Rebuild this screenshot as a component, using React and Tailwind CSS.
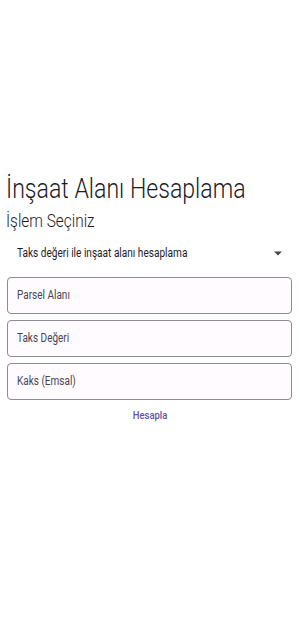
import React, { useState } from 'react';

const fields = ['Parsel Alanı', 'Taks Değeri', 'Kaks (Emsal)'];

// the screenshot is a bit narrow, so text gets squeezed horizontally
function T({ children, s = 'scale-x-[0.85]', o = 'origin-left' }) {
  return <span className={`inline-block whitespace-nowrap ${o} ${s}`}>{children}</span>;
}

export default function App() {
  const [mode] = useState('Taks değeri ile inşaat alanı hesaplama');

  return (
    <div className="w-[300px] h-[617px] bg-white overflow-hidden" style={{ fontFamily: 'Roboto, "Noto Sans", sans-serif' }}>
      <div className="pt-[171px] px-[6px]">
        {/* Title */}
        <h1 className="text-[28px] leading-[36px] font-light text-[#1c1b1f]"><T s="scale-x-[0.825]">İnşaat Alanı Hesaplama</T></h1>
        <h2 className="mt-[2px] text-[19px] leading-[24px] font-light text-[#1c1b1f]"><T s="scale-x-[0.81]">İşlem Seçiniz</T></h2>

        {/* Dropdown */}
        <div className="mt-[8px] h-[24px] flex items-center justify-between pl-[11px] pr-[12px]">
          <span className="text-[12px] text-[#1c1b1f]"><T s="scale-x-[0.84]">{mode}</T></span>
          <svg width="8" height="5" viewBox="0 0 10 5" className="fill-[#49454f]">
            <path d="M0 0 L5 5 L10 0 Z" />
          </svg>
        </div>

        {/* Inputs */}
        <div className="mt-[12px] flex flex-col gap-[6px] pl-[1px] pr-[2px]">
          {fields.map(f => (
            <div key={f} className="h-[37px] rounded-[4px] border border-[#8f8a93] bg-[#fffbff] flex items-center px-[9px]">
              <span className="text-[12.5px] text-[#49454f]"><T s="scale-x-[0.8]">{f}</T></span>
            </div>
          ))}
        </div>

        <div className="mt-[7px] flex justify-center">
          <button className="text-[11.5px] font-medium text-[#6750a4]"><T o="origin-center" s="scale-x-[0.82]">Hesapla</T></button>
        </div>
      </div>
    </div>
  );
}
